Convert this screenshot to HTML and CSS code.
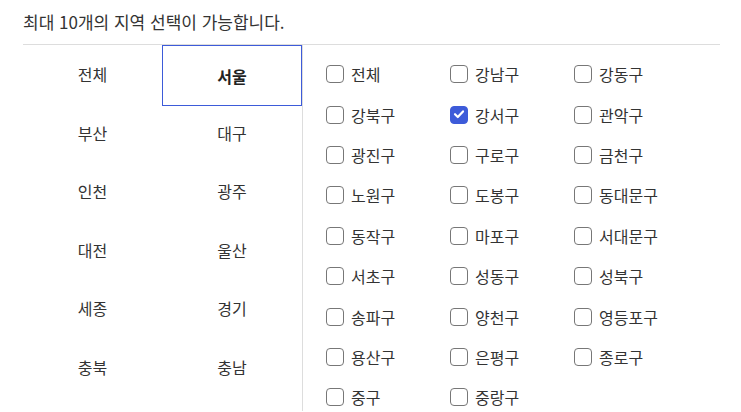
FILE: index.html
```html
<!DOCTYPE html>
<html lang="ko">
<head>
<meta charset="utf-8">
<link rel="stylesheet" href="styles.css">
</head>
<body>
<div class="wrap">
  <div class="head">최대 10개의 지역 선택이 가능합니다.</div>
  <div class="body">
    <div class="sido">
      <div class="sido-item">전체</div>
      <div class="sido-item active">서울</div>
      <div class="sido-item">부산</div>
      <div class="sido-item">대구</div>
      <div class="sido-item">인천</div>
      <div class="sido-item">광주</div>
      <div class="sido-item">대전</div>
      <div class="sido-item">울산</div>
      <div class="sido-item">세종</div>
      <div class="sido-item">경기</div>
      <div class="sido-item">충북</div>
      <div class="sido-item">충남</div>
    </div>
    <div class="gu">
      <label class="gu-item"><span class="box"></span>전체</label>
      <label class="gu-item"><span class="box"></span>강남구</label>
      <label class="gu-item"><span class="box"></span>강동구</label>
      <label class="gu-item"><span class="box"></span>강북구</label>
      <label class="gu-item"><span class="box checked"><svg viewBox="0 0 18 18" width="18" height="18"><path d="M5 9.2 L7.8 12 L13 6.4" fill="none" stroke="#fff" stroke-width="2.2" stroke-linecap="round" stroke-linejoin="round"/></svg></span>강서구</label>
      <label class="gu-item"><span class="box"></span>관악구</label>
      <label class="gu-item"><span class="box"></span>광진구</label>
      <label class="gu-item"><span class="box"></span>구로구</label>
      <label class="gu-item"><span class="box"></span>금천구</label>
      <label class="gu-item"><span class="box"></span>노원구</label>
      <label class="gu-item"><span class="box"></span>도봉구</label>
      <label class="gu-item"><span class="box"></span>동대문구</label>
      <label class="gu-item"><span class="box"></span>동작구</label>
      <label class="gu-item"><span class="box"></span>마포구</label>
      <label class="gu-item"><span class="box"></span>서대문구</label>
      <label class="gu-item"><span class="box"></span>서초구</label>
      <label class="gu-item"><span class="box"></span>성동구</label>
      <label class="gu-item"><span class="box"></span>성북구</label>
      <label class="gu-item"><span class="box"></span>송파구</label>
      <label class="gu-item"><span class="box"></span>양천구</label>
      <label class="gu-item"><span class="box"></span>영등포구</label>
      <label class="gu-item"><span class="box"></span>용산구</label>
      <label class="gu-item"><span class="box"></span>은평구</label>
      <label class="gu-item"><span class="box"></span>종로구</label>
      <label class="gu-item"><span class="box"></span>중구</label>
      <label class="gu-item"><span class="box"></span>중랑구</label>
    </div>
  </div>
</div>
</body>
</html>
```
FILE: styles.css
```css
html, body {
  margin: 0;
  padding: 0;
  background: #fff;
}
body {
  font-family: "Noto Sans CJK KR", "Noto Sans", sans-serif;
  color: #222;
  overflow: hidden;
}
.wrap {
  margin-left: 23px;
  width: 697px;
}
.head {
  height: 45px;
  box-sizing: border-box;
  padding-top: 10px;
  font-size: 17px;
  line-height: 24px;
  color: #333;
  border-bottom: 1px solid #ddd;
}
.body {
  display: flex;
  height: 366px;
}
.sido {
  width: 279px;
  display: grid;
  grid-template-columns: 139px 140px;
  grid-auto-rows: 58.5px;
  align-content: start;
  border-right: 1px solid #ddd;
}
.sido-item {
  display: flex;
  align-items: center;
  justify-content: center;
  font-size: 16px;
  color: #333;
}
.sido-item.active {
  border: 1px solid #3d5bd9;
  font-weight: 700;
  color: #222;
  height: 61px;
  box-sizing: border-box;
}
.gu {
  flex: 1;
  padding: 9px 0 0 23px;
  display: grid;
  grid-template-columns: repeat(3, 124px);
  grid-auto-rows: 40.4px;
  align-content: start;
}
.gu-item {
  display: flex;
  align-items: center;
  gap: 7px;
  font-size: 16px;
  color: #333;
}
.box {
  width: 18px;
  height: 18px;
  box-sizing: border-box;
  border: 1.5px solid #777;
  border-radius: 4px;
  flex: none;
  display: flex;
}
.box.checked {
  background: #3d5bd9;
  border-color: #3d5bd9;
}
.box.checked svg {
  margin: -1.5px;
}
```
